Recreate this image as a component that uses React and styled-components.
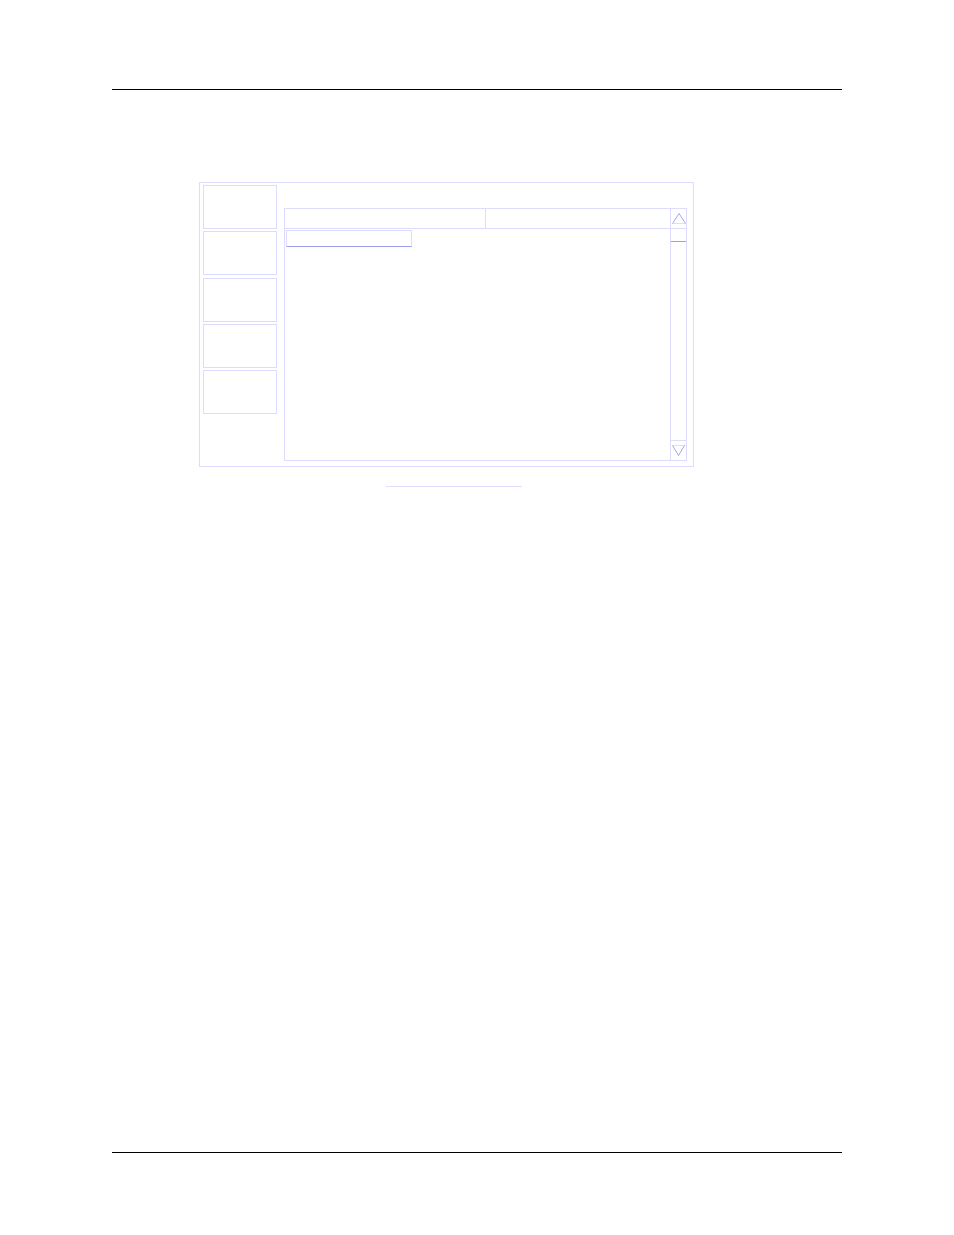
import React from 'react';
import styled, { createGlobalStyle } from 'styled-components';

const softKeys = [1, 2, 3, 4, 5];

const App = () => {
  return (
    <>
      <GlobalStyle />
      <PageWrapper>
        <Rule />
        <Figure>
          <Screen>
            <SoftKeys>
              {softKeys.map((key) => (
                <SoftKey key={key} type="button" aria-label={`Soft key ${key}`} />
              ))}
            </SoftKeys>
            <ListPanel>
              <ListArea>
                <ListHeader>
                  <HeaderCell $divider />
                  <HeaderCell />
                </ListHeader>
                <ListBody>
                  <SelectedItem />
                </ListBody>
              </ListArea>
              <ScrollBar>
                <ArrowButton type="button" aria-label="Scroll up">
                  <Arrow viewBox="0 0 15 19">
                    <path d="M1.5 14.5H14.5" stroke="#dcdcff" />
                    <path d="M1.5 14.5L8 4.5L14.5 14.5" stroke="#a4a4ee" />
                  </Arrow>
                </ArrowButton>
                <Track>
                  <Thumb />
                </Track>
                <ArrowButton type="button" aria-label="Scroll down">
                  <Arrow viewBox="0 0 15 19">
                    <path d="M1.5 4.5H14.5" stroke="#dcdcff" />
                    <path d="M1.5 4.5L7.5 14.5L13.5 4.5" stroke="#a4a4ee" />
                  </Arrow>
                </ArrowButton>
              </ScrollBar>
            </ListPanel>
          </Screen>
          <CaptionLine />
        </Figure>
        <Rule />
      </PageWrapper>
    </>
  );
};

const GlobalStyle = createGlobalStyle`
  * {
    box-sizing: border-box;
  }

  body {
    margin: 0;
    background: #ffffff;
    font-family: 'Liberation Sans', sans-serif;
  }
`;

const PageWrapper = styled.div`
  display: flex;
  flex-direction: column;
  min-height: 100vh;
  padding: 89px 112px 82px;
`;

const Rule = styled.hr`
  width: 100%;
  height: 1px;
  margin: 0;
  border: none;
  background: #000000;
`;

const Figure = styled.main`
  flex: 1;
  padding: 92px 148px 0 87px;
`;

const Screen = styled.section`
  display: flex;
  gap: 7px;
  padding: 2px 6px 5px 3px;
  border: 1px solid #dcdcff;
`;

const SoftKeys = styled.nav`
  display: flex;
  flex-direction: column;
  justify-content: space-between;
  width: 74px;
  height: 229px;
`;

const SoftKey = styled.button`
  height: 44px;
  padding: 0;
  border: 1px solid #dcdcff;
  background: transparent;
`;

const ListPanel = styled.div`
  display: flex;
  flex: 1;
  margin-top: 23px;
  border: 1px solid #dcdcff;
`;

const ListArea = styled.div`
  display: flex;
  flex-direction: column;
  flex: 1;
`;

const ListHeader = styled.div`
  display: grid;
  grid-template-columns: 201fr 184fr;
  height: 20px;
  border-bottom: 1px solid #dcdcff;
`;

const HeaderCell = styled.div`
  border-right: ${({ $divider }) => ($divider ? '1px solid #dcdcff' : 'none')};
`;

const ListBody = styled.div`
  min-height: 231px;
  padding: 1px;
`;

const SelectedItem = styled.div`
  width: 126px;
  height: 17px;
  border: 1px solid #dcdcff;
  border-bottom-color: #9c9cf0;
`;

const ScrollBar = styled.div`
  display: flex;
  flex-direction: column;
  width: 16px;
  border-left: 1px solid #dcdcff;
`;

const ArrowButton = styled.button`
  display: flex;
  height: 19px;
  padding: 0;
  border: none;
  background: transparent;
`;

const Arrow = styled.svg`
  width: 15px;
  height: 19px;
  fill: none;
`;

const Track = styled.div`
  flex: 1;
  border-top: 1px solid #dcdcff;
  border-bottom: 1px solid #dcdcff;
`;

const Thumb = styled.div`
  height: 13px;
  border-bottom: 1px solid #9c9cf0;
`;

const CaptionLine = styled.div`
  width: 136px;
  height: 1px;
  margin: 19px 0 0 187px;
  background: #dcdcff;
`;

export default App;
